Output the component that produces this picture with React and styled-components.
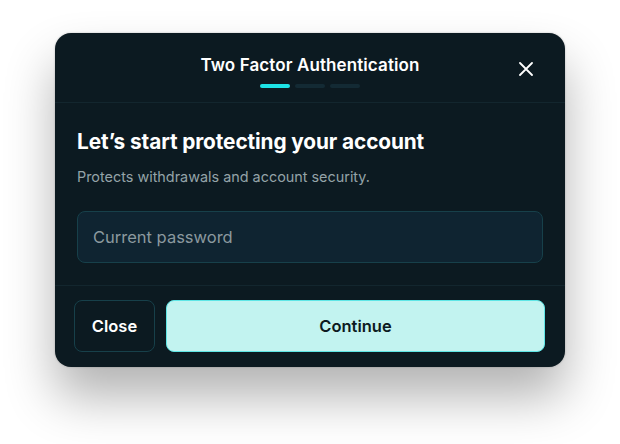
import React from 'react';
import styled, { createGlobalStyle } from 'styled-components';

const GlobalStyle = createGlobalStyle`
  html, body {
    margin: 0;
    padding: 0;
    background: #ffffff;
  }
  body {
    font-family: Inter, "Noto Sans", sans-serif;
    -webkit-font-smoothing: antialiased;
  }
`;

const Page = styled.div`
  width: 620px;
  height: 444px;
  padding: 33px 0 0 55px;
  box-sizing: border-box;
`;

const Modal = styled.div`
  width: 510px;
  background: #0c1a21;
  border-radius: 16px;
  box-shadow: 0 30px 50px rgba(0, 0, 0, 0.3), 0 0 2px rgba(0, 0, 0, 0.25);
  overflow: hidden;
  color: #ffffff;
`;

const Header = styled.div`
  position: relative;
  height: 70px;
  display: flex;
  flex-direction: column;
  align-items: center;
  padding-top: 22px;
  box-sizing: border-box;
  border-bottom: 1px solid #13262e;
`;

const Title = styled.div`
  font-size: 17px;
  font-weight: 600;
  line-height: 20px;
  letter-spacing: 0.1px;
`;

const Steps = styled.div`
  display: flex;
  gap: 5px;
  margin-top: 9px;
`;

const Step = styled.div`
  width: 30px;
  height: 4px;
  border-radius: 2px;
  background: ${({ $active }) => ($active ? '#1de3e6' : '#132a34')};
`;

const CloseIcon = styled.button`
  position: absolute;
  right: 31px;
  top: 28px;
  width: 16px;
  height: 16px;
  padding: 0;
  border: none;
  background: none;
  display: flex;
  align-items: center;
  justify-content: center;
  cursor: pointer;
`;

const Body = styled.div`
  padding: 25px 22px 22px 22px;
  border-bottom: 1px solid #13262e;
`;

const Heading = styled.h2`
  margin: 0;
  font-size: 20.8px;
  font-weight: 700;
  line-height: 28px;
  letter-spacing: -0.1px;
`;

const Subtitle = styled.p`
  margin: 11px 0 0 0;
  font-size: 14.4px;
  line-height: 20px;
  color: #94a3a8;
`;

const Input = styled.input`
  display: block;
  width: 100%;
  box-sizing: border-box;
  margin-top: 24px;
  height: 52px;
  padding: 0 15px;
  border-radius: 8px;
  border: 1px solid #17404a;
  background: #0f2431;
  color: #ffffff;
  font-family: inherit;
  font-size: 16.5px;
  outline: none;
  &::placeholder {
    color: #8b999f;
  }
`;

const Footer = styled.div`
  display: flex;
  gap: 11px;
  padding: 14px 20px 15px 19px;
`;

const Button = styled.button`
  height: 52px;
  border-radius: 8px;
  font-family: inherit;
  font-size: 16.5px;
  font-weight: 600;
  cursor: pointer;
  box-sizing: border-box;
`;

const GhostButton = styled(Button)`
  width: 81px;
  background: transparent;
  color: #ffffff;
  border: 1px solid #17404a;
`;

const PrimaryButton = styled(Button)`
  flex: 1;
  background: #c2f3f0;
  color: #0c1a21;
  border: 1px solid #5fe6e6;
`;

export default function App() {
  return (
    <>
      <GlobalStyle />
      <Page>
        <Modal>
          <Header>
            <Title>Two Factor Authentication</Title>
            <Steps>
              <Step $active />
              <Step />
              <Step />
            </Steps>
            <CloseIcon aria-label="Close">
              <svg width="14" height="14" viewBox="0 0 14 14" fill="none">
                <path d="M1 1L13 13M13 1L1 13" stroke="#ffffff" strokeWidth="1.8" strokeLinecap="round" />
              </svg>
            </CloseIcon>
          </Header>
          <Body>
            <Heading>Let’s start protecting your account</Heading>
            <Subtitle>Protects withdrawals and account security.</Subtitle>
            <Input placeholder="Current password" type="password" />
          </Body>
          <Footer>
            <GhostButton>Close</GhostButton>
            <PrimaryButton>Continue</PrimaryButton>
          </Footer>
        </Modal>
      </Page>
    </>
  );
}
